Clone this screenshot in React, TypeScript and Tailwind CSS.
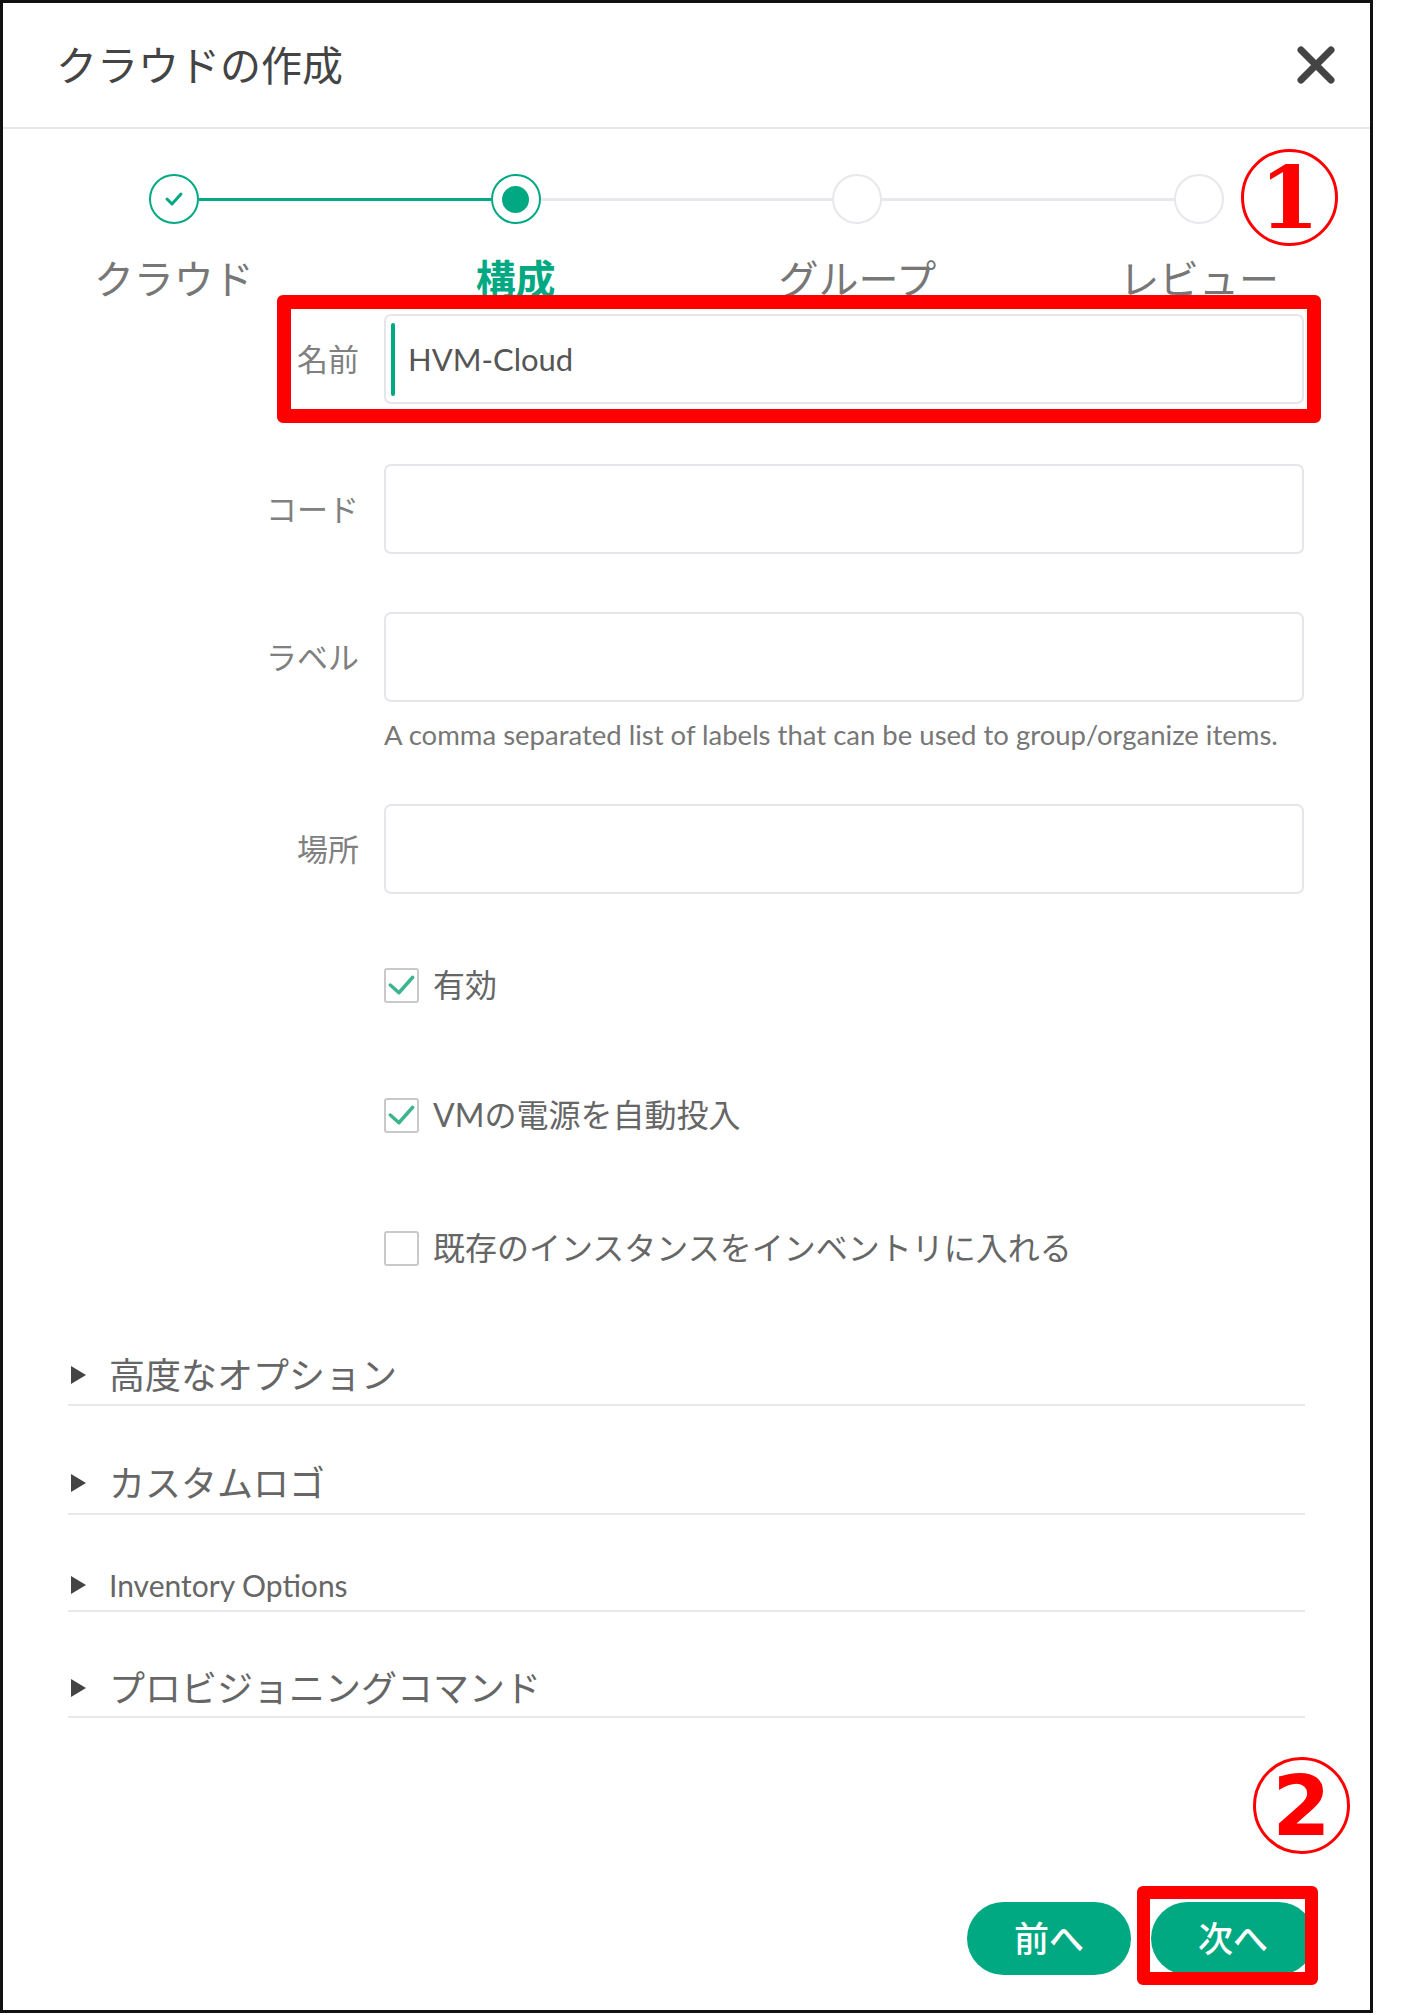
import React from "react";

const green = "#01a982";

function Check({ className }: { className?: string }) {
  return (
    <svg viewBox="0 0 36 36" className={className} fill="none">
      <path d="M5 18 L15 27 L31 9" stroke="#3cb48e" strokeWidth="4" strokeLinecap="round" strokeLinejoin="round" />
    </svg>
  );
}

function Checkbox({ checked, label, className }: { checked: boolean; label: string; className: string }) {
  return (
    <div className={"flex items-center h-[40px] ml-[381px] gap-[14px] " + className}>
      <div className="w-[35px] h-[35px] border-2 border-[#c9c9c9] rounded-[3px] flex items-center justify-center">
        {checked && <Check className="w-[34px] h-[34px]" />}
      </div>
      <span className="text-[32px] leading-none text-[#666]">{label}</span>
    </div>
  );
}

function Field({ label, value, className }: { label: string; value?: string; className: string }) {
  return (
    <div className={"flex items-center ml-[256px] gap-[25px] " + className}>
      <span className="w-[100px] text-right text-[31px] leading-none text-[#808080] whitespace-nowrap">{label}</span>
      <div className="w-[920px] h-[90px] border-2 border-[#e4e6ea] rounded-[7px] flex items-center pl-[5px]">
        {value !== undefined && (
          <>
            <div className="w-[4px] h-[73px] bg-[#01a982] rounded-[2px]" />
            <span className="ml-[13px] text-[31px] text-[#555]">{value}</span>
          </>
        )}
      </div>
    </div>
  );
}

const sections = [
  { text: "高度なオプション", cls: "pt-[87px] pb-[9px]", size: "text-[36px]" },
  { text: "カスタムロゴ", cls: "pt-[57px] pb-[10px]", size: "text-[36px]" },
  { text: "Inventory Options", cls: "pt-[50px] pb-[5px]", size: "text-[30px]" },
  { text: "プロビジョニングコマンド", cls: "pt-[56px] pb-[8px]", size: "text-[36px]" },
];

export default function App() {
  return (
    <div
      className="relative w-[1425px] h-[2015px] bg-white"
      style={{ fontFamily: '"Lato", "Noto Sans CJK JP", sans-serif' }}
    >
      <div className="w-[1373px] h-[2013px] border-[3px] border-[#111] flex flex-col">
        {/* header */}
        <div className="h-[126px] flex items-center justify-between pl-[53px] pr-[34px] border-b-2 border-[#e6e6e6] shrink-0">
          <h1 className="text-[41px] leading-none text-[#444]">クラウドの作成</h1>
          <svg viewBox="0 0 40 38" className="w-[40px] h-[38px]">
            <path d="M5 4 L35 34 M35 4 L5 34" stroke="#444" strokeWidth="7" strokeLinecap="round" />
          </svg>
        </div>

        {/* stepper */}
        <div className="flex items-center px-[146px] pt-[45px]">
          <div className="w-[50px] h-[50px] rounded-full border-2 border-[#01a982] flex items-center justify-center">
            <svg viewBox="0 0 20 20" className="w-[20px] h-[20px]" fill="none">
              <path d="M3 10 L8 15 L17 5" stroke={green} strokeWidth="3" strokeLinecap="round" strokeLinejoin="round" />
            </svg>
          </div>
          <div className="flex-1 h-[3px] bg-[#01a982]" />
          <div className="w-[50px] h-[50px] rounded-full border-2 border-[#01a982] flex items-center justify-center">
            <div className="w-[27px] h-[27px] rounded-full bg-[#01a982]" />
          </div>
          <div className="flex-1 h-[3px] bg-[#e6e8ec]" />
          <div className="w-[50px] h-[50px] rounded-full border-2 border-[#e6e8ec]" />
          <div className="flex-1 h-[3px] bg-[#e6e8ec]" />
          <div className="w-[50px] h-[50px] rounded-full border-2 border-[#e6e8ec]" />
        </div>
        <div className="grid grid-cols-4 text-center text-[40px] leading-none h-[40px] mt-[35px] text-[#777]">
          <span>クラウド</span>
          <span className="font-bold text-[#01a982]">構成</span>
          <span>グループ</span>
          <span>レビュー</span>
        </div>

        {/* form */}
        <Field label="名前" value="HVM-Cloud" className="mt-[15px]" />
        <Field label="コード" className="mt-[60px]" />
        <Field label="ラベル" className="mt-[58px]" />
        <p className="ml-[381px] mt-[17px] text-[27.5px] leading-[32px] text-[#777]">
          A comma separated list of labels that can be used to group/organize items.
        </p>
        <Field label="場所" className="mt-[53px]" />

        <Checkbox checked label="有効" className="mt-[71px]" />
        <Checkbox checked label="VMの電源を自動投入" className="mt-[90px]" />
        <Checkbox checked={false} label="既存のインスタンスをインベントリに入れる" className="mt-[93px]" />

        {/* accordions */}
        <div className="ml-[65px] w-[1237px]">
          {sections.map((s) => (
            <div key={s.text} className={"border-b-2 border-[#e8e8e8] " + s.cls}>
              <div className="flex items-center h-[40px] gap-[23px]">
                <svg viewBox="0 0 15 18" className="w-[15px] h-[18px] ml-[3px]">
                  <path d="M0 0 L15 9 L0 18 Z" fill="#444" />
                </svg>
                <span className={"leading-none text-[#666] " + s.size}>{s.text}</span>
              </div>
            </div>
          ))}
        </div>

        {/* footer buttons */}
        <div className="flex justify-end gap-[20px] pr-[55px] mt-[184px]">
          <button className="w-[164px] h-[73px] rounded-full bg-[#01a982] text-white text-[35px] leading-none font-medium">前へ</button>
          <button className="w-[164px] h-[73px] rounded-full bg-[#01a982] text-white text-[35px] leading-none font-medium">次へ</button>
        </div>
      </div>

      {/* annotations */}
      <div className="absolute left-[277px] top-[295px] w-[1044px] h-[128px] border-[14px] border-[#ff0000] rounded-[6px]" />
      <div className="absolute left-[1241px] top-[149px] w-[97px] h-[97px] rounded-full border-[3px] border-[#ff0000] flex items-center justify-center">
        <span className="text-[86px] leading-none font-bold text-[#ff0000]" style={{ fontFamily: '"DejaVu Serif", serif' }}>1</span>
      </div>
      <div className="absolute left-[1253px] top-[1757px] w-[97px] h-[97px] rounded-full border-[3px] border-[#ff0000] flex items-center justify-center">
        <span className="text-[84px] leading-none font-bold text-[#ff0000]" style={{ fontFamily: '"DejaVu Sans", sans-serif' }}>2</span>
      </div>
      <div className="absolute left-[1137px] top-[1886px] w-[181px] h-[99px] border-[13px] border-[#ff0000] rounded-[6px]" />
    </div>
  );
}
